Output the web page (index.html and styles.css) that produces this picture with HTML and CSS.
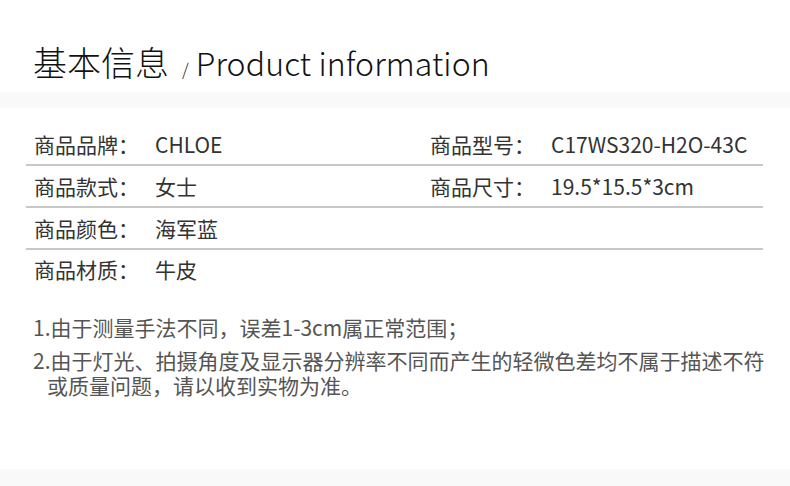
FILE: index.html
```html
<!DOCTYPE html>
<html lang="zh-CN">
<head>
<meta charset="utf-8">
<title>基本信息 / Product information</title>
<link rel="stylesheet" href="styles.css">
</head>
<body>
<div class="page">
  <header class="head">
    <h1 class="title"><span class="zh">基本信息</span><span class="slash">/</span><span class="en">Product information</span></h1>
  </header>
  <div class="band"></div>
  <section class="table">
    <div class="row">
      <div class="cell"><span class="label">商品品牌：</span><span class="value">CHLOE</span></div>
      <div class="cell"><span class="label">商品型号：</span><span class="value">C17WS320-H2O-43C</span></div>
    </div>
    <div class="row">
      <div class="cell"><span class="label">商品款式：</span><span class="value">女士</span></div>
      <div class="cell"><span class="label">商品尺寸：</span><span class="value">19.5*15.5*3cm</span></div>
    </div>
    <div class="row">
      <div class="cell"><span class="label">商品颜色：</span><span class="value">海军蓝</span></div>
      <div class="cell"></div>
    </div>
    <div class="row last">
      <div class="cell"><span class="label">商品材质：</span><span class="value">牛皮</span></div>
      <div class="cell"></div>
    </div>
  </section>
  <section class="notes">
    <p class="note">1.由于测量手法不同，误差1-3cm属正常范围；</p>
    <p class="note">2.由于灯光、拍摄角度及显示器分辨率不同而产生的轻微色差均不属于描述不符<br><span class="indent">或质量问题，请以收到实物为准。</span></p>
  </section>
  <div class="band footer-band"></div>
</div>
</body>
</html>
```

FILE: styles.css
```css
* { box-sizing: border-box; }
html, body { margin: 0; padding: 0; background: #fff; }
body {
  font-family: "Noto Sans CJK SC", "Noto Sans", sans-serif;
  color: #333;
}
.page {
  min-height: 486px;
  display: flex;
  flex-direction: column;
}
.head {
  height: 92px;
  padding: 32px 0 0 33px;
  display: flex;
  align-items: center;
}
.title {
  margin: 0;
  font-weight: 200;
  color: #111;
  display: flex;
  align-items: baseline;
  white-space: nowrap;
}
.zh { font-size: 34px; line-height: 40px; }
.slash { font-size: 17px; margin: 0 7px 0 13px; color: #222; }
.en { font-size: 32px; letter-spacing: 0.1px; }
.band {
  height: 16px;
  background: #f9f9f9;
}
.table {
  margin: 16px 0 0 26px;
  width: 737px;
}
.row {
  display: grid;
  grid-template-columns: 396px 1fr;
  height: 42px;
  padding-left: 8px;
  border-bottom: 2px solid #c8c8c8;
  align-items: center;
  font-size: 21px;
  color: #333;
}
.row.last { border-bottom: none; height: 38px; }
.cell { display: flex; align-items: center; white-space: nowrap; }
.label { width: 121px; }
.notes {
  margin: 27px 0 0 33px;
  color: #555;
  font-size: 21px;
}
.note {
  margin: 0 0 8px;
  line-height: 25px;
  white-space: nowrap;
}
.indent { padding-left: 14px; }
.footer-band {
  margin-top: auto;
  height: 17px;
}
```
